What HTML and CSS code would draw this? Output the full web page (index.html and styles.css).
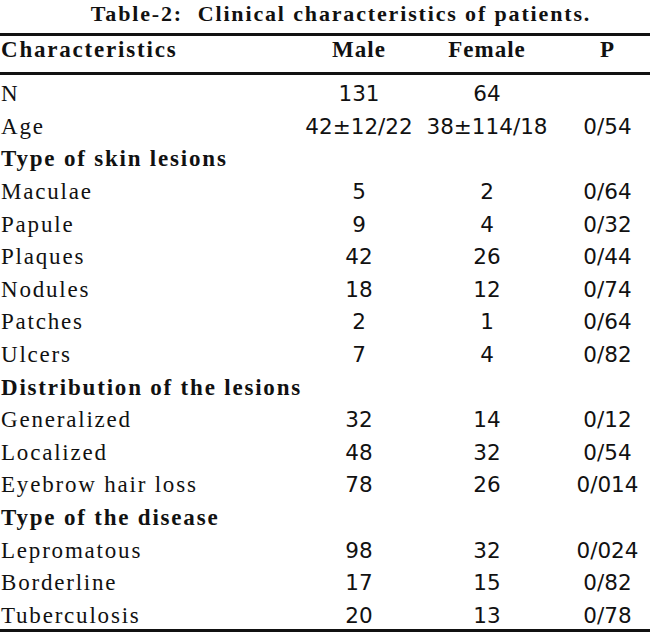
FILE: index.html
```html
<!DOCTYPE html>
<html>
<head>
<meta charset="utf-8">
<link rel="stylesheet" href="styles.css">
</head>
<body>
<div class="table">
  <div class="caption">Table-2:&nbsp; Clinical characteristics of patients.</div>
  <div class="rule"></div>
  <div class="row head">
    <div class="label">Characteristics</div>
    <div class="col">Male</div>
    <div class="col">Female</div>
    <div class="col p">P</div>
  </div>
  <div class="rule"></div>
  <div class="row"><div class="label">N</div><div class="col num">131</div><div class="col num">64</div><div class="col num p"></div></div>
  <div class="row"><div class="label">Age</div><div class="col num">42±12/22</div><div class="col num">38±114/18</div><div class="col num p">0/54</div></div>
  <div class="row"><div class="label section">Type of skin lesions</div></div>
  <div class="row"><div class="label">Maculae</div><div class="col num">5</div><div class="col num">2</div><div class="col num p">0/64</div></div>
  <div class="row"><div class="label">Papule</div><div class="col num">9</div><div class="col num">4</div><div class="col num p">0/32</div></div>
  <div class="row"><div class="label">Plaques</div><div class="col num">42</div><div class="col num">26</div><div class="col num p">0/44</div></div>
  <div class="row"><div class="label">Nodules</div><div class="col num">18</div><div class="col num">12</div><div class="col num p">0/74</div></div>
  <div class="row"><div class="label">Patches</div><div class="col num">2</div><div class="col num">1</div><div class="col num p">0/64</div></div>
  <div class="row"><div class="label">Ulcers</div><div class="col num">7</div><div class="col num">4</div><div class="col num p">0/82</div></div>
  <div class="row"><div class="label section">Distribution of the lesions</div></div>
  <div class="row"><div class="label">Generalized</div><div class="col num">32</div><div class="col num">14</div><div class="col num p">0/12</div></div>
  <div class="row"><div class="label">Localized</div><div class="col num">48</div><div class="col num">32</div><div class="col num p">0/54</div></div>
  <div class="row"><div class="label">Eyebrow hair loss</div><div class="col num">78</div><div class="col num">26</div><div class="col num p">0/014</div></div>
  <div class="row"><div class="label section">Type of the disease</div></div>
  <div class="row"><div class="label">Lepromatous</div><div class="col num">98</div><div class="col num">32</div><div class="col num p">0/024</div></div>
  <div class="row"><div class="label">Borderline</div><div class="col num">17</div><div class="col num">15</div><div class="col num p">0/82</div></div>
  <div class="row"><div class="label">Tuberculosis</div><div class="col num">20</div><div class="col num">13</div><div class="col num p">0/78</div></div>
  <div class="rule"></div>
</div>
</body>
</html>
```
FILE: styles.css
```css
html, body {
  margin: 0;
  padding: 0;
  background: #fff;
}
body {
  width: 650px;
  color: #111;
  font-family: "Liberation Serif", "Times New Roman", serif;
}
.table {
  display: flex;
  flex-direction: column;
}
.caption {
  box-sizing: border-box;
  height: 32.5px;
  padding-top: 1.6px;
  padding-left: 32px;
  text-align: center;
  font-weight: bold;
  font-size: 22px;
  line-height: 24px;
  letter-spacing: 1.85px;
  white-space: nowrap;
}
.rule {
  height: 3px;
  background: #111;
}
.row {
  box-sizing: border-box;
  display: grid;
  grid-template-columns: 292px 134px 122px 1fr;
  align-items: baseline;
  height: 32.6px;
  padding-top: 7.2px;
  font-size: 23px;
  line-height: 24px;
}
.row.head {
  height: 36.5px;
  padding-top: 2.7px;
  font-weight: bold;
}
.label {
  padding-left: 1px;
  letter-spacing: 1.8px;
  white-space: nowrap;
}
.section {
  font-weight: bold;
}
.col {
  text-align: center;
  letter-spacing: 1px;
  white-space: nowrap;
}
.col.p {
  padding-left: 17px;
}
.num {
  font-family: "DejaVu Sans", Verdana, sans-serif;
  font-size: 21.5px;
  letter-spacing: 0;
}
```
